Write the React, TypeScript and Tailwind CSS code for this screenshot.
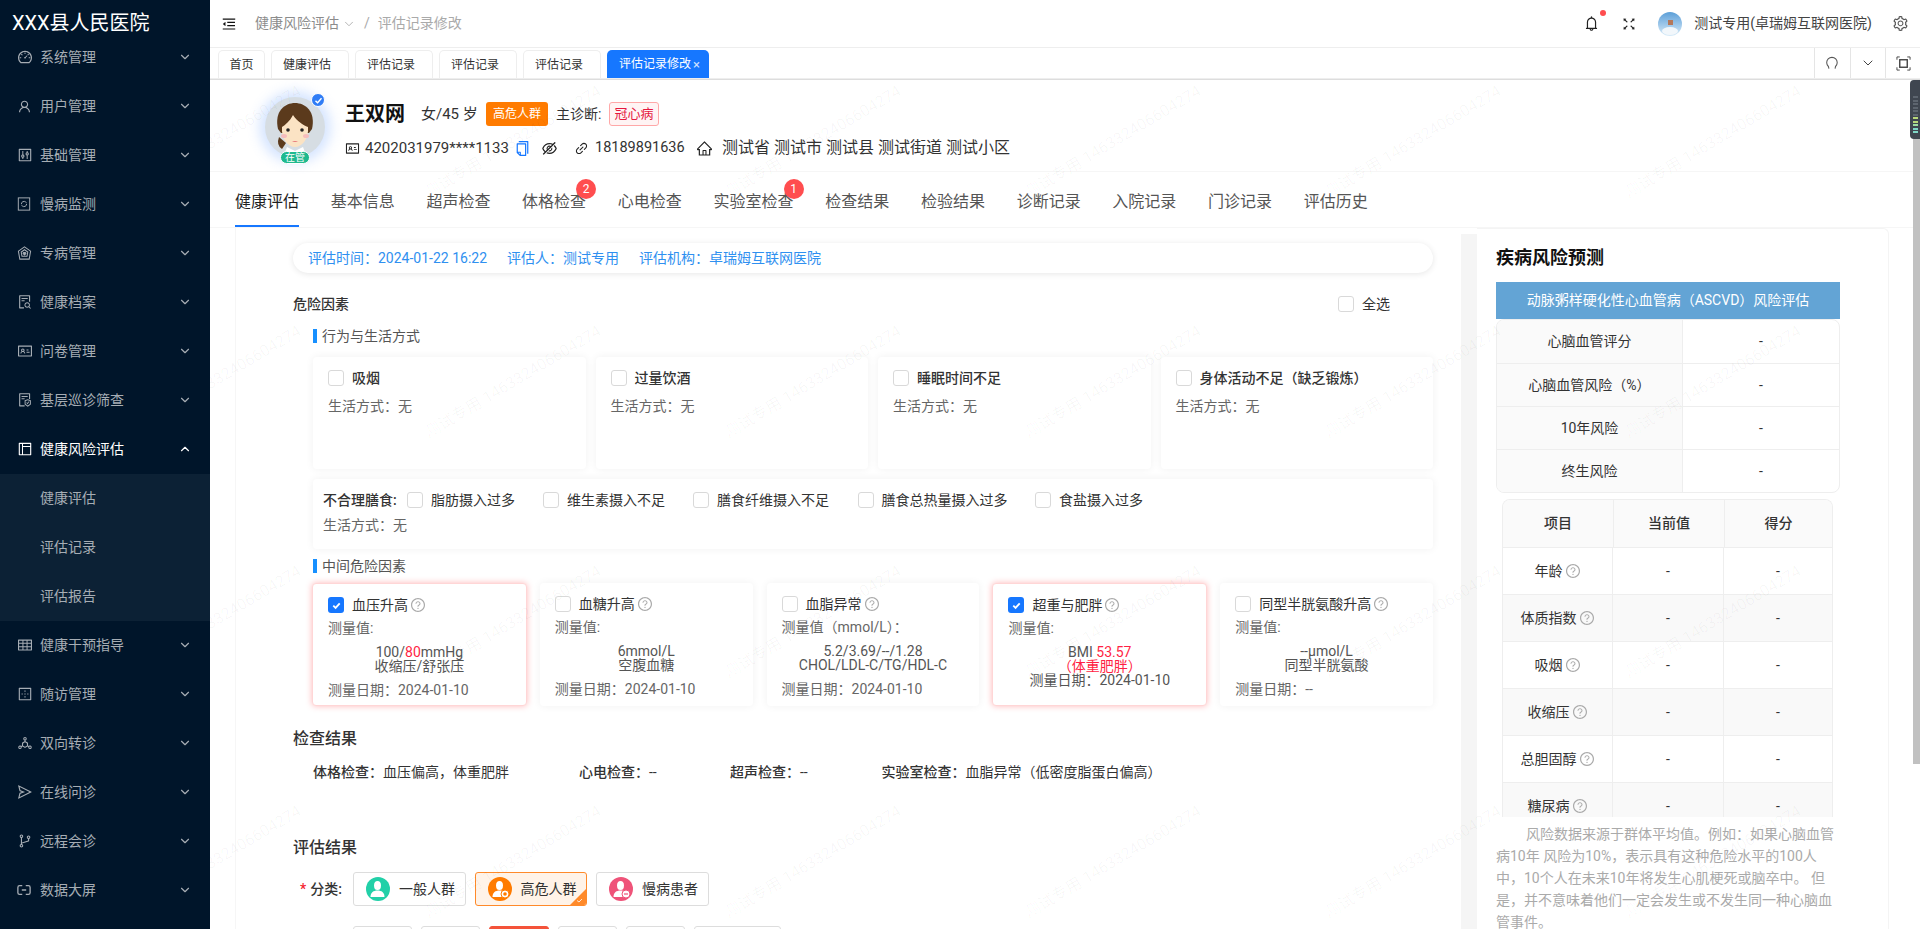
import type { ReactNode } from "react";
import { ChevronDown, ChevronUp } from "lucide-react";
import {
  AiOutlineBell,
  AiOutlineBorderOuter,
  AiOutlineBranches,
  AiOutlineControl,
  AiOutlineCopy,
  AiOutlineDashboard,
  AiOutlineDeploymentUnit,
  AiOutlineEyeInvisible,
  AiOutlineFileProtect,
  AiOutlineFileSearch,
  AiOutlineFullscreen,
  AiOutlineHome,
  AiOutlineIdcard,
  AiOutlineLayout,
  AiOutlineLink,
  AiOutlineMenuFold,
  AiOutlineQuestionCircle,
  AiOutlineSend,
  AiOutlineSetting,
  AiOutlineTable,
  AiOutlineUser,
} from "react-icons/ai";

const MonitorIcon = () => (
  <svg viewBox="0 0 16 16" className="w-[14px] h-[14px]" fill="none" stroke="currentColor" strokeWidth="1.1">
    <rect x="1.5" y="1" width="13" height="14" />
    <path d="M5 8a3 3 0 0 1 5-2.2l1 .9M11 8a3 3 0 0 1-5 2.2l-1-.9" />
  </svg>
);

const ClinicIcon = () => (
  <svg viewBox="0 0 16 16" className="w-[15px] h-[15px]" fill="none" stroke="currentColor" strokeWidth="1.1">
    <path d="M8 1l6.5 4.5-1.5 8.5H3L1.5 5.5z" />
    <path d="M8 4l3.5 2.5-.8 4.5H5.300L4.500 6.500z" />
    <path d="M8 9.500L6.500 8a1 1 0 0 1 1.500-1 1 1 0 0 1 1.500 1z" fill="currentColor" />
  </svg>
);

const ScreenIcon = () => (
  <svg viewBox="0 0 16 16" className="w-[14px] h-[14px]" fill="none" stroke="currentColor" strokeWidth="1.500">
    <path d="M6 3H3a2 2 0 0 0-2 2v6a2 2 0 0 0 2 2h3M10 3h3a2 2 0 0 1 2 2v6a2 2 0 0 1-2 2h-3M5.500 8h5" />
  </svg>
);

const MENU_TOP: [string, ReactNode][] = [
  ["系统管理", <AiOutlineDashboard size={16} />],
  ["用户管理", <AiOutlineUser size={15} />],
  ["基础管理", <AiOutlineControl size={16} />],
  ["慢病监测", <MonitorIcon />],
  ["专病管理", <ClinicIcon />],
  ["健康档案", <AiOutlineFileSearch size={16} />],
  ["问卷管理", <AiOutlineIdcard size={16} />],
  ["基层巡诊筛查", <AiOutlineFileProtect size={16} />],
];

const MENU_BOTTOM: [string, ReactNode][] = [
  ["健康干预指导", <AiOutlineTable size={16} />],
  ["随访管理", <AiOutlineBorderOuter size={16} />],
  ["双向转诊", <AiOutlineDeploymentUnit size={16} />],
  ["在线问诊", <AiOutlineSend size={16} />],
  ["远程会诊", <AiOutlineBranches size={16} />],
  ["数据大屏", <ScreenIcon />],
];

const MenuItem = ({ label, icon }: { label: string; icon: ReactNode }) => (
  <div className="h-[49px] flex items-center pl-[17px] pr-[18px] text-[14px] text-[#a6adb4]">
    <span className="w-[23px] flex items-center">{icon}</span>
    <span className="flex-1">{label}</span>
    <ChevronDown className="w-[14px] h-[14px]" />
  </div>
);

const Sidebar = () => (
  <aside className="w-[210px] shrink-0 bg-[#00152a] relative z-20">
    <div className="h-[32.5px] pl-[12px] text-[20px] leading-[46px] text-white whitespace-nowrap">XXX县人民医院</div>
    {MENU_TOP.map(([label, icon]) => (
      <MenuItem key={label} label={label} icon={icon} />
    ))}
    <div className="h-[49px] flex items-center pl-[17px] pr-[18px] text-[14px] text-white">
      <span className="w-[23px] flex items-center">
        <AiOutlineLayout size={16} />
      </span>
      <span className="flex-1">健康风险评估</span>
      <ChevronUp className="w-[14px] h-[14px]" />
    </div>
    <div className="bg-[#0c2135]">
      {["健康评估", "评估记录", "评估报告"].map((label) => (
        <div key={label} className="h-[49px] flex items-center pl-[40px] text-[14px] text-[#a6adb4]">
          {label}
        </div>
      ))}
    </div>
    {MENU_BOTTOM.map(([label, icon]) => (
      <MenuItem key={label} label={label} icon={icon} />
    ))}
  </aside>
);

const TopBar = () => (
  <header className="h-[48px] shrink-0 flex items-center border-b border-[#eeeeee] pl-[11px] pr-[11px]">
    <AiOutlineMenuFold size={16} className="text-[#111]" />
    <span className="ml-[18px] text-[14px] text-[#8c8c8c]">健康风险评估</span>
    <ChevronDown className="ml-[3px] w-[14px] h-[14px] text-[#aaa]" strokeWidth={1.5} />
    <span className="ml-[8px] text-[14px] text-[#aaa]">/</span>
    <span className="ml-[8px] text-[14px] text-[#aaa]">评估记录修改</span>
    <div className="ml-auto relative">
      <AiOutlineBell size={17} className="text-[#222]" />
      <span className="absolute -top-[5px] -right-[6px] w-[6px] h-[6px] rounded-full bg-[#ff4d4f]" />
    </div>
    <AiOutlineFullscreen size={16} className="ml-[21px] text-[#222]" />
    <div className="ml-[21px] w-[24px] h-[24px] rounded-full overflow-hidden bg-gradient-to-b from-[#5b9fd8] to-[#d9ecf8]">
      <svg viewBox="0 0 24 24" className="w-full h-full">
        <rect x="10" y="8" width="5" height="5" fill="#b5785a" />
        <ellipse cx="12" cy="19" rx="8" ry="4" fill="#f2f7fb" />
      </svg>
    </div>
    <span className="ml-[12px] text-[14px] text-[#444] whitespace-nowrap">测试专用(卓瑞姆互联网医院)</span>
    <AiOutlineSetting size={17} className="ml-[20px] text-[#555]" />
  </header>
);

const TABS: [string, string][] = [
  ["首页", "w-[47.5px]"],
  ["健康评估", "w-[78px]"],
  ["评估记录", "w-[78px]"],
  ["评估记录", "w-[78px]"],
  ["评估记录", "w-[78px]"],
];

const TabBar = () => (
  <div className="h-[32px] shrink-0 border-b border-[#dddddd]">
    <div className="h-[31px] flex border-b border-[#eeeeee]">
      <div className="flex items-end gap-[6px] pl-[7.500px]">
        {TABS.map(([label, width], i) => (
          <div
            key={i}
            className={`${width} h-[28px] flex items-center pl-[11px] text-[12px] text-[#333] border border-b-0 border-[#eeeeee] rounded-t-[5px] whitespace-nowrap`}
          >
            {label}
          </div>
        ))}
        <div className="w-[102px] h-[28px] flex items-center pl-[12px] text-[12px] text-white bg-[#1677ff] rounded-t-[5px] whitespace-nowrap">
          评估记录修改
          <span className="ml-[2px] text-[13px] leading-none text-[#cfe2ff]">×</span>
        </div>
      </div>
      <div className="ml-auto flex">
        <div className="w-[35.500px] border-l border-[#e5e5e5] flex items-center justify-center">
          <svg viewBox="0 0 16 16" className="w-[14px] h-[14px]" fill="none" stroke="#555" strokeWidth="1.200">
            <path d="M4.500 14.500l-.6-2.500A6 6 0 1 1 12 12l-.5 2.500" />
          </svg>
        </div>
        <div className="w-[35.500px] border-l border-[#e5e5e5] flex items-center justify-center">
          <ChevronDown className="w-[16px] h-[16px] text-[#444]" strokeWidth={1.500} />
        </div>
        <div className="w-[35px] border-l border-[#e5e5e5] flex items-center justify-center">
          <svg viewBox="0 0 16 16" className="w-[15px] h-[15px]" fill="none" stroke="#444" strokeWidth="1">
            <path d="M1 4V1h3M12 1h3v3M15 12v3h-3M4 15H1v-3" />
            <rect x="4" y="4" width="8" height="8" strokeWidth="1.500" />
          </svg>
        </div>
      </div>
    </div>
  </div>
);

const PatientAvatar = () => (
  <div className="relative w-[60px] h-[60px] shrink-0">
    <div className="w-[60px] h-[60px] rounded-full overflow-hidden bg-[#d6dde3] shadow-[0_0_12px_6px_rgba(120,170,255,0.3)]">
      <svg viewBox="0 0 60 60" className="w-full h-full">
        <path d="M13 32C9 14 20 6 30 6s21 8 17 26l-3 4H16z" fill="#5b3a1c" />
        <path d="M17 30c3-2 8-6 11-12 4 6 10 10 15 12 1 12-6 20-13 20s-14-8-13-20z" fill="#fbe3c4" />
        <circle cx="23" cy="33" r="1.800" fill="#222" />
        <circle cx="37" cy="33" r="1.800" fill="#222" />
        <ellipse cx="19" cy="39" rx="3" ry="2" fill="#f6bcbc" />
        <ellipse cx="41" cy="39" rx="3" ry="2" fill="#f6bcbc" />
        <path d="M27 44q3 2 6 0z" fill="#e87a7a" />
        <path d="M22 50l-3 8h22l-3-8-8 4z" fill="#fff" />
        <path d="M14 40q-3 8 3 12l4-6z" fill="#5b3a1c" />
      </svg>
    </div>
    <span className="absolute left-[15px] top-[54px] w-[30px] h-[13px] rounded-full bg-[#1fb98f] border border-white text-white text-[10px] leading-[11px] text-center">
      在管
    </span>
    <span className="absolute -top-[4px] left-[46px] w-[14px] h-[14px] rounded-full bg-[#2f7cf6] border border-white flex items-center justify-center">
      <svg viewBox="0 0 12 12" className="w-[9px] h-[9px]" fill="none" stroke="#fff" strokeWidth="1.800">
        <path d="M2 6.500l2.800 2.500L10 3" />
      </svg>
    </span>
  </div>
);

const Profile = () => (
  <div className="h-[91px] shrink-0 flex pl-[55px] pt-[17px]">
    <PatientAvatar />
    <div className="ml-[20px] pt-[5px]">
      <div className="h-[24px] flex items-center">
        <span className="text-[20px] font-bold text-[#111] w-[76px]">王双网</span>
        <span className="text-[15px] text-[#333] w-[65px] whitespace-nowrap">女/45 岁</span>
        <span className="w-[62px] h-[24px] rounded-[3px] bg-[#ff7b00] text-white text-[12px] leading-[24px] text-center">高危人群</span>
        <span className="ml-[8px] w-[53px] text-[14px] text-[#333] whitespace-nowrap">主诊断:</span>
        <span className="w-[50px] h-[24px] rounded-[3px] border border-[#ffa8a8] bg-[#fff4f4] text-[#e5173f] text-[13px] leading-[22px] text-center">冠心病</span>
      </div>
      <div className="mt-[10px] h-[24px] flex items-center text-[#333]">
        <AiOutlineIdcard size={15} className="text-[#222]" />
        <span className="ml-[5px] text-[15px] w-[146px]">4202031979****1133</span>
        <AiOutlineCopy size={17} className="ml-[3px] text-[#1677ff]" />
        <AiOutlineEyeInvisible size={17} className="ml-[10px] text-[#222]" />
        <AiOutlineLink size={15} className="ml-[16px] text-[#222]" />
        <span className="ml-[6px] text-[14.500px] w-[91px]">18189891636</span>
        <AiOutlineHome size={17} className="ml-[10px] text-[#222]" />
        <span className="ml-[9px] text-[16px] whitespace-pre">测试省 测试市 测试县 测试街道 测试小区</span>
      </div>
    </div>
  </div>
);

const NAV: [string, number?][] = [
  ["健康评估"],
  ["基本信息"],
  ["超声检查"],
  ["体格检查", 2],
  ["心电检查"],
  ["实验室检查", 1],
  ["检查结果"],
  ["检验结果"],
  ["诊断记录"],
  ["入院记录"],
  ["门诊记录"],
  ["评估历史"],
];

const NavTabs = () => (
  <nav className="h-[57px] shrink-0 flex gap-[31.7px] pl-[25px] border-y border-[#f6f6f6]">
    {NAV.map(([label, badge], i) => (
      <div
        key={label}
        className={`relative h-full flex items-center pt-[6px] border-b-2 text-[16px] whitespace-nowrap ${i === 0 ? "text-[#1f1f1f] border-[#1677ff]" : "text-[#555] border-transparent"}`}
      >
        {label}
        {badge && (
          <span className="absolute top-[7px] -right-[10px] w-[20px] h-[20px] rounded-full bg-[#ff4d4f] text-white text-[12px] leading-[20px] text-center">
            {badge}
          </span>
        )}
      </div>
    ))}
  </nav>
);

const Checkbox = ({ checked = false }: { checked?: boolean }) =>
  checked ? (
    <span className="w-[16px] h-[16px] shrink-0 rounded-[3px] bg-[#1677ff] flex items-center justify-center">
      <svg viewBox="0 0 12 12" className="w-[11px] h-[11px]" fill="none" stroke="#fff" strokeWidth="2">
        <path d="M2.500 6.200l2.500 2.400 4.500-5" />
      </svg>
    </span>
  ) : (
    <span className="w-[16px] h-[16px] shrink-0 rounded-[3px] border border-[#d9d9d9] bg-white" />
  );

const Help = () => <AiOutlineQuestionCircle size={16} className="shrink-0 text-[#aaaaaa]" />;

const SectionLabel = ({ children, className }: { children: ReactNode; className: string }) => (
  <div className={`h-[14px] flex items-center gap-[5px] text-[14px] text-[#555] ${className}`}>
    <span className="w-[4px] h-[14px] bg-[#1890ff]" />
    {children}
  </div>
);

const LIFESTYLE = ["吸烟", "过量饮酒", "睡眠时间不足", "身体活动不足（缺乏锻炼）"];
const DIET: [string, string][] = [
  ["脂肪摄入过多", "w-[136px]"],
  ["维生素摄入不足", "w-[150px]"],
  ["膳食纤维摄入不足", "w-[164.500px]"],
  ["膳食总热量摄入过多", "w-[177.500px]"],
  ["食盐摄入过多", "w-[120px]"],
];

interface RiskCard {
  title: string;
  checked?: boolean;
  measure: string;
  value: ReactNode;
  sub: ReactNode;
  date: string;
  inlineDate?: boolean;
}

const RISK_CARDS: RiskCard[] = [
  {
    title: "血压升高",
    checked: true,
    measure: "测量值:",
    value: (
      <>
        100/<span className="text-[#ff1f44]">80</span>mmHg
      </>
    ),
    sub: "收缩压/舒张压",
    date: "2024-01-10",
  },
  { title: "血糖升高", measure: "测量值:", value: "6mmol/L", sub: "空腹血糖", date: "2024-01-10" },
  {
    title: "血脂异常",
    measure: "测量值（mmol/L）：",
    value: "5.2/3.69/--/1.28",
    sub: "CHOL/LDL-C/TG/HDL-C",
    date: "2024-01-10",
  },
  {
    title: "超重与肥胖",
    checked: true,
    measure: "测量值:",
    value: (
      <>
        BMI <span className="text-[#ff1f44]">53.57</span>
      </>
    ),
    sub: <span className="text-[#ff1f44]">（体重肥胖）</span>,
    date: "2024-01-10",
    inlineDate: true,
  },
  { title: "同型半胱氨酸升高", measure: "测量值:", value: "--μmol/L", sub: "同型半胱氨酸", date: "--" },
];

const RiskCardBox = ({ card }: { card: RiskCard }) => (
  <div
    className={`h-[123px] rounded-[4px] bg-white px-[15px] pt-[13px] ${card.checked ? "border border-[#ffd6d6] shadow-[0_0_6px_rgba(255,77,79,0.4)] -mx-px" : "shadow-[0_0_8px_rgba(0,0,0,0.06)]"}`}
  >
    <div className="h-[16px] flex items-center text-[14px] text-[#333] whitespace-nowrap">
      <Checkbox checked={card.checked} />
      <span className="ml-[8px] mr-[2px]">{card.title}</span>
      <Help />
    </div>
    <div className="mt-[5px] h-[20px] leading-[20px] text-[14px] text-[#666] whitespace-nowrap">{card.measure}</div>
    <div className="mt-[7px] text-center text-[14px] leading-[14px] text-[#555] whitespace-nowrap">
      <div>{card.value}</div>
      <div>{card.sub}</div>
      {card.inlineDate && <div>测量日期：{card.date}</div>}
    </div>
    {!card.inlineDate && (
      <div className="mt-[7px] h-[20px] leading-[20px] text-[14px] text-[#666] whitespace-nowrap">测量日期：{card.date}</div>
    )}
  </div>
);

const PersonBadge = ({ color, mark }: { color: string; mark?: "star" | "minus" }) => (
  <span className="w-[24px] h-[24px] rounded-full flex items-center justify-center" style={{ backgroundColor: color }}>
    <svg viewBox="0 0 24 24" className="w-[24px] h-[24px]" fill="#fff">
      <ellipse cx="11.500" cy="8.500" rx="3.500" ry="4.500" />
      <path d="M4.500 20c0-4.500 3-6.500 7-6.500s7 2 7 6.500z" />
      {mark && <circle cx="17" cy="17" r="4" stroke={color} strokeWidth="1" />}
      {mark === "star" && <circle cx="17" cy="17" r="1.800" fill={color} />}
      {mark === "minus" && <path d="M15 17h4" stroke={color} strokeWidth="1.200" />}
    </svg>
  </span>
);

const KIND: [string, string, boolean, ("star" | "minus")?][] = [
  ["一般人群", "#22d0a8", false],
  ["高危人群", "#ff7b00", true, "star"],
  ["慢病患者", "#ef5379", false, "minus"],
];

const ResultButtons = () => (
  <div className="mt-[12px] h-[34px] flex items-center">
    <span className="w-[60px] pl-[7px] text-[14px] font-medium text-[#333] whitespace-nowrap">
      <span className="text-[#f5222d] mr-[4px]">*</span>分类:
    </span>
    <div className="flex gap-[9px]">
      {KIND.map(([label, color, active, mark]) => (
        <div
          key={label}
          className={`relative h-[34px] w-[112.500px] flex items-center pl-[12px] gap-[9px] rounded-[3px] border text-[14px] text-[#333] ${active ? "bg-[#fff3e8] border-[#ff8a2a]" : "bg-white border-[#dddddd]"}`}
        >
          <PersonBadge color={color} mark={mark} />
          {label}
          {active && (
            <svg viewBox="0 0 16 16" className="absolute right-0 bottom-0 w-[16px] h-[16px]">
              <path d="M16 0v14a2 2 0 0 1-2 2H0z" fill="#ff8a2a" />
              <path d="M7 11.500l2 1.500 3-3" fill="none" stroke="#fff" strokeWidth="0.800" />
            </svg>
          )}
        </div>
      ))}
    </div>
  </div>
);

const LeftPanel = () => (
  <div className="ml-[25px] w-[1226px] shrink-0 border-l border-[#f6f6f6] pl-[57px] pr-[28px] overflow-hidden">
    <div className="mt-[15px] h-[30px] rounded-full bg-white shadow-[0_1px_6px_rgba(0,0,0,0.1)] flex items-center gap-[20px] pl-[15px] text-[14px] text-[#2f90f0] whitespace-nowrap">
      <span>评估时间：2024-01-22 16:22</span>
      <span>评估人：测试专用</span>
      <span>评估机构：卓瑞姆互联网医院</span>
    </div>
    <div className="mt-[21px] h-[20px] flex items-center justify-between text-[14px] text-[#333]">
      <span className="font-medium">危险因素</span>
      <span className="flex items-center gap-[8px] mr-[43px]">
        <Checkbox />
        全选
      </span>
    </div>
    <div className="pl-[20px]">
      <SectionLabel className="mt-[15px]">行为与生活方式</SectionLabel>
      <div className="mt-[14px] grid grid-cols-4 gap-[10px]">
        {LIFESTYLE.map((title) => (
          <div key={title} className="h-[112px] rounded-[4px] bg-white shadow-[0_0_8px_rgba(0,0,0,0.06)] px-[15px] pt-[13px]">
            <div className="h-[16px] flex items-center gap-[8px] text-[14px] font-medium text-[#333] whitespace-nowrap">
              <Checkbox />
              {title}
            </div>
            <div className="mt-[10px] text-[14px] leading-[20px] text-[#666]">生活方式：无</div>
          </div>
        ))}
      </div>
      <div className="mt-[10px] h-[70px] rounded-[4px] bg-white shadow-[0_0_8px_rgba(0,0,0,0.06)] pl-[10px] pt-[11px]">
        <div className="h-[20px] flex items-center text-[14px] text-[#333] whitespace-nowrap">
          <span className="w-[84px] font-medium">不合理膳食:</span>
          {DIET.map(([label, width]) => (
            <span key={label} className={`${width} flex items-center gap-[8px]`}>
              <Checkbox />
              {label}
            </span>
          ))}
        </div>
        <div className="mt-[5px] text-[14px] leading-[20px] text-[#666]">生活方式：无</div>
      </div>
      <SectionLabel className="mt-[10px]">中间危险因素</SectionLabel>
      <div className="mt-[10px] grid grid-cols-5 gap-[14px]">
        {RISK_CARDS.map((card) => (
          <RiskCardBox key={card.title} card={card} />
        ))}
      </div>
    </div>
    <h3 className="mt-[21px] h-[24px] leading-[24px] text-[16px] font-medium text-[#333]">检查结果</h3>
    <div className="mt-[11px] h-[20px] pl-[20px] flex items-center text-[14px] text-[#333] whitespace-nowrap">
      <span className="w-[266px]">
        <span className="font-medium">体格检查：</span>血压偏高，体重肥胖
      </span>
      <span className="w-[151px]">
        <span className="font-medium">心电检查：</span>--
      </span>
      <span className="w-[151.500px]">
        <span className="font-medium">超声检查：</span>--
      </span>
      <span>
        <span className="font-medium">实验室检查：</span>血脂异常（低密度脂蛋白偏高）
      </span>
    </div>
    <h3 className="mt-[54px] h-[24px] leading-[24px] text-[16px] font-medium text-[#333]">评估结果</h3>
    <ResultButtons />
    <div className="mt-[20px] ml-[60px] flex gap-[9px]">
      {["w-[59px]", "w-[59px]", "w-[60px] bg-[#f4533a] border-[#f4533a]", "w-[59px]", "w-[59px]", "w-[87px]"].map((cls, i) => (
        <div key={i} className={`${cls} h-[30px] rounded-[3px] border border-[#dddddd]`} />
      ))}
    </div>
  </div>
);

const ASCVD_ROWS = ["心脑血管评分", "心脑血管风险（%）", "10年风险", "终生风险"];
const SCORE_ROWS = ["年龄", "体质指数", "吸烟", "收缩压", "总胆固醇", "糖尿病"];

const RightPanel = () => (
  <div className="w-[412px] shrink-0 rounded-tr-[6px] border-t border-r border-[#f4f4f4] pl-[19px] text-[14px] text-[#333]">
    <h2 className="mt-[16px] h-[26px] leading-[26px] text-[18px] font-bold text-[#111]">疾病风险预测</h2>
    <div className="mt-[11px] w-[344px] h-[37px] bg-[#63a4d5] text-white text-center leading-[37px]">
      动脉粥样硬化性心血管病（ASCVD）风险评估
    </div>
    <div className="w-[344px] rounded-[8px] border border-[#eeeeee] overflow-hidden">
      {ASCVD_ROWS.map((label, i) => (
        <div key={label} className={`h-[43px] grid grid-cols-[186px_1fr] ${i > 0 ? "border-t border-[#eeeeee]" : ""}`}>
          <div className="bg-[#fafafa] border-r border-[#eeeeee] flex items-center justify-center">{label}</div>
          <div className="flex items-center justify-center">-</div>
        </div>
      ))}
    </div>
    <div className="mt-[6px] ml-[6px] w-[331px] h-[318px] overflow-hidden rounded-t-[8px] border-t border-x border-[#eeeeee]">
      <div className="h-[47px] grid grid-cols-[111px_111px_1fr] bg-[#fafafa] font-medium text-center">
        <div className="border-r border-[#eeeeee] flex items-center justify-center">项目</div>
        <div className="border-r border-[#eeeeee] flex items-center justify-center">当前值</div>
        <div className="flex items-center justify-center">得分</div>
      </div>
      {SCORE_ROWS.map((label, i) => (
        <div key={label} className={`h-[47px] grid grid-cols-[110px_111px_1fr] border-t border-[#eeeeee] ${i % 2 === 1 ? "bg-[#f9f9f9]" : "bg-white"}`}>
          <div className="border-r border-[#eeeeee] flex items-center justify-center gap-[2px]">
            {label}
            <Help />
          </div>
          <div className="border-r border-[#eeeeee] flex items-center justify-center">-</div>
          <div className="flex items-center justify-center">-</div>
        </div>
      ))}
    </div>
    <p className="mt-[6px] w-[340px] text-[14px] leading-[22px] text-[#aaaaaa] indent-[30px]">
      风险数据来源于群体平均值。例如：如果心脑血管病10年 风险为10%，表示具有这种危险水平的100人中，10个人在未来10年将发生心肌梗死或脑卒中。 但是，并不意味着他们一定会发生或不发生同一种心脑血管事件。
    </p>
  </div>
);

const WATERMARK_X = [131, 431, 731, 1031, 1331, 1631];
const WATERMARK_Y = [203, 443, 683, 923];

const Watermarks = () => (
  <div className="absolute inset-0 overflow-hidden pointer-events-none z-10">
    {WATERMARK_Y.flatMap((y) =>
      WATERMARK_X.map((x) => (
        <span
          key={`${x}-${y}`}
          className="absolute h-[20px] leading-[20px] text-[16px] text-black/[0.035] whitespace-nowrap origin-bottom-left rotate-[-31deg]"
          style={{ left: x - 210, top: y - 20 }}
        >
          测试专用 146332406604274
        </span>
      )),
    )}
  </div>
);

const App = () => (
  <div className="w-[1920px] h-[929px] flex overflow-hidden bg-white text-[#333] font-['Roboto','Noto_Sans_CJK_SC',sans-serif]">
    <Sidebar />
    <main className="flex-1 min-w-0 flex flex-col relative">
      <TopBar />
      <TabBar />
      <div className="flex-1 min-h-0 flex">
        <div className="flex-1 min-w-0 flex flex-col">
          <Profile />
          <NavTabs />
          <div className="flex-1 min-h-0 flex overflow-hidden">
            <LeftPanel />
            <div className="w-[16px] shrink-0 mt-[6px] bg-[#f5f5f5]" />
            <RightPanel />
          </div>
        </div>
        <div className="w-[7px] shrink-0 relative">
          <div className="absolute top-0 left-0 right-0 h-[684px] bg-[#c1c1c1]" />
        </div>
      </div>
      <div className="absolute right-0 top-[80px] w-[10px] h-[59px] rounded-l-[4px] bg-[#3f4650] z-20 flex flex-col items-center justify-end pb-[6px] gap-[1.500px]">
        {["#5d656f", "#5d656f", "#5d656f", "#5d656f", "#5d656f", "#5d656f", "#b7d77a", "#b7d77a", "#9fdc9f", "#7fd6c6", "#7fd6c6"].map((c, i) => (
          <span key={i} className="w-[5px] h-[2px]" style={{ backgroundColor: c }} />
        ))}
      </div>
      <Watermarks />
    </main>
  </div>
);

export default App;
